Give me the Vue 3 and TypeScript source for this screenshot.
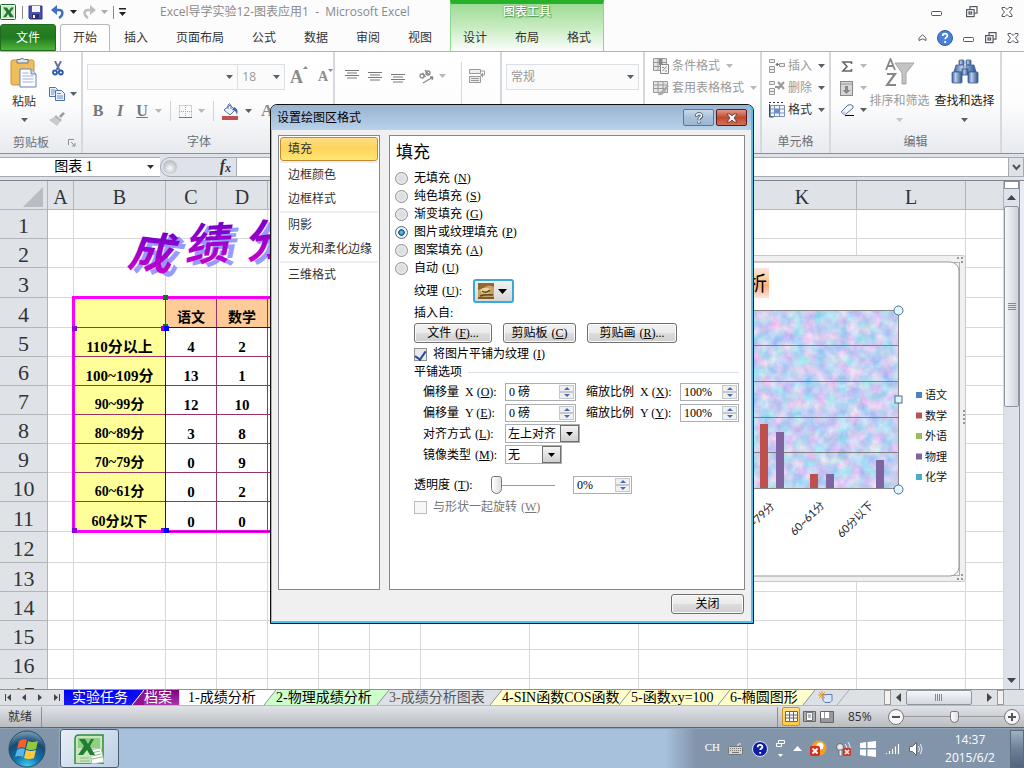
<script setup lang="ts">
import { h, ref } from 'vue'

const Caret = (props: { tone?: string }) =>
  h('svg', { width: 7, height: 4, viewBox: '0 0 7 4' }, [h('path', { d: 'M0 0h7L3.5 4z', fill: props.tone ?? '#5a5f66' })])
Caret.props = ['tone']

const ribbonTabs = ['插入', '页面布局', '公式', '数据', '审阅', '视图']
const chartTabs = ['设计', '布局', '格式']

const columns = ['A', 'B', 'C', 'D', '', '', '', '', '', '', 'K', 'L', '']

interface Row { n: number; label: string; wide?: boolean; c: string; d: string }
const scores: Row[] = [
  { n: 5, label: '110分以上', wide: true, c: '4', d: '2' },
  { n: 6, label: '100~109分', wide: true, c: '13', d: '1' },
  { n: 7, label: '90~99分', c: '12', d: '10' },
  { n: 8, label: '80~89分', c: '3', d: '8' },
  { n: 9, label: '70~79分', c: '0', d: '9' },
  { n: 10, label: '60~61分', c: '0', d: '2' },
  { n: 11, label: '60分以下', c: '0', d: '0' },
]

const legend = [
  { name: '语文', color: '#4f81bd' },
  { name: '数学', color: '#c0504d' },
  { name: '外语', color: '#9bbb59' },
  { name: '物理', color: '#8064a2' },
  { name: '化学', color: '#4bacc6' },
]
const bars = [
  { x: 300, y: 169, color: '#c0504d' },
  { x: 316, y: 177, color: '#8064a2' },
  { x: 350, y: 219, color: '#c0504d' },
  { x: 366, y: 219, color: '#8064a2' },
  { x: 416, y: 205, color: '#8064a2' },
]
const gridlines = [90, 126, 162, 197]

const sections = [['填充'], ['边框颜色', '边框样式'], ['阴影', '发光和柔化边缘'], ['三维格式']]
const fills = [
  { text: '无填充', key: 'N' },
  { text: '纯色填充', key: 'S' },
  { text: '渐变填充', key: 'G' },
  { text: '图片或纹理填充', key: 'P' },
  { text: '图案填充', key: 'A' },
  { text: '自动', key: 'U' },
]
const fill = ref('P')
const tile = ref(true)
const transparency = ref(0)
const zoom = ref(50)

interface SheetTab { name: string; width: number; bg: string; fg: string; next: string; end?: boolean }
const sheetTabs: SheetTab[] = [
  { name: '2-物理成绩分析', width: 101, bg: '#ccffcc', fg: '#000', next: '#dde1e6' },
  { name: '3-成绩分析图表', width: 101, bg: '#dde1e6', fg: '#555', next: '#ffffcc' },
  { name: '4-SIN函数COS函数', width: 117, bg: '#ffffcc', fg: '#000', next: '#ffffcc' },
  { name: '5-函数xy=100', width: 87, bg: '#ffffcc', fg: '#000', next: '#ffffcc' },
  { name: '6-椭圆图形', width: 73, bg: '#ffffcc', fg: '#000', next: '#dde1e6' },
]
</script>

<template>
  <div class="desktop">
    <header class="head">
      <div class="head-left">
        <div class="title-row">
          <svg width="17" height="17" viewBox="0 0 17 17"><rect x=".5" y=".5" width="15" height="15" rx="1" fill="#e9f5e6" stroke="#1c6b2c" /><path d="M2 2h12v12H2z" fill="#cfe8c9" /><path d="M3 3.500h4l2 3 2-3h3l-3.500 4.800 3.500 5h-4l-2-3.200-2 3.200H3l3.500-5z" fill="#1d7a2f" /></svg>
          <i class="qsep"></i>
          <button class="ib" aria-label="保存"><svg width="15" height="15" viewBox="0 0 15 15"><path d="M1 1h13v13H2l-1-1z" fill="#4a52b5" stroke="#2b3188" /><path d="M4 1h8v6H4z" fill="#f4f6fb" /><path d="M4 9h7v5H4z" fill="#2a2f70" /><path d="M5 10h2v3H5z" fill="#fff" /></svg></button>
          <button class="ib undo" aria-label="撤消"><svg width="14" height="14" viewBox="0 0 14 14"><path d="M4 5h4c5 0 4 6 0 8" fill="none" stroke="#3d6fc0" stroke-width="2.500" /><path d="M0 5l6-5v10z" fill="#3d6fc0" /></svg></button>
          <Caret tone="#222" />
          <button class="ib" aria-label="恢复"><svg width="14" height="14" viewBox="0 0 14 14"><path d="M10 5H6C1 5 2 11 6 13" fill="none" stroke="#bcbec2" stroke-width="2.500" /><path d="M14 5L8 0v10z" fill="#bcbec2" /></svg></button>
          <Caret tone="#aaa" />
          <i class="qsep"></i>
          <button class="ib" aria-label="自定义快速访问工具栏"><svg width="7" height="8" viewBox="0 0 7 8"><path d="M0 0h7v1.500H0zM0 4h7L3.500 8z" fill="#222" /></svg></button>
          <h1 class="title">Excel导学实验12-图表应用1&nbsp; - &nbsp;Microsoft Excel</h1>
        </div>
        <nav class="tab-row">
          <button class="file">文件</button>
          <button class="rtab active">开始</button>
          <button v-for="t in ribbonTabs" :key="t" class="rtab">{{ t }}</button>
        </nav>
      </div>
      <div class="context">
        <div class="context-title">图表工具</div>
        <nav class="context-tabs"><button v-for="t in chartTabs" :key="t" class="rtab">{{ t }}</button></nav>
      </div>
      <div class="head-right">
        <div class="win-row">
          <button class="ib" aria-label="最小化"><svg width="12" height="12" viewBox="0 0 12 12"><rect x=".5" y="5.500" width="10" height="4" rx="1" fill="#fff" stroke="#53585f" /></svg></button>
          <button class="ib" aria-label="向下还原"><svg width="12" height="12" viewBox="0 0 12 12"><g fill="#fff" stroke="#53585f" stroke-width="1.200"><rect x="4" y=".6" width="7" height="6.500" /><rect x=".6" y="3.600" width="7.500" height="7" /><rect x="3" y="6" width="2.600" height="2" /></g></svg></button>
          <button class="ib" aria-label="关闭"><svg width="12" height="12" viewBox="0 0 12 12"><path d="M1 1.500h3l2 2 2-2h3v1.500l-2.500 3 2.500 3v1.500H8l-2-2-2 2H1V9l2.500-3L1 3z" fill="#fff" stroke="#53585f" /></svg></button>
        </div>
        <div class="doc-row">
          <button class="ib" aria-label="折叠功能区"><svg width="9" height="8" viewBox="0 0 9 8"><path d="M4.500.7L8 4.200v2.300L4.500 4.800 1 6.500V4.200z" fill="#fff" stroke="#53585f" /></svg></button>
          <button class="ib" aria-label="帮助"><svg width="16" height="16" viewBox="0 0 16 16"><circle cx="8" cy="8" r="7.500" fill="#4a80d6" stroke="#2e5fae" /><path d="M5.700 6c0-3 4.700-3 4.700-.2 0 1.500-2.200 1.700-2.200 3.400M8.200 11v2" fill="none" stroke="#fff" stroke-width="1.800" /></svg></button>
          <button class="ib" aria-label="最小化工作簿"><svg width="12" height="12" viewBox="0 0 12 12"><rect x=".5" y="5.500" width="10" height="4" rx="1" fill="#fff" stroke="#53585f" /></svg></button>
          <button class="ib" aria-label="还原工作簿"><svg width="12" height="12" viewBox="0 0 12 12"><g fill="#fff" stroke="#53585f" stroke-width="1.200"><rect x="4" y=".6" width="7" height="6.500" /><rect x=".6" y="3.600" width="7.500" height="7" /><rect x="3" y="6" width="2.600" height="2" /></g></svg></button>
          <button class="ib" aria-label="关闭工作簿"><svg width="12" height="12" viewBox="0 0 12 12"><path d="M1 1.500h3l2 2 2-2h3v1.500l-2.500 3 2.500 3v1.500H8l-2-2-2 2H1V9l2.500-3L1 3z" fill="#fff" stroke="#53585f" /></svg></button>
        </div>
      </div>
    </header>

    <section class="ribbon">
      <div class="group g-clip">
        <div class="g-body">
          <button class="big paste">
            <svg width="28" height="32" viewBox="0 0 28 32"><rect x="1" y="3" width="23" height="25" rx="2" fill="#f0bd5c" stroke="#c8923a" /><path d="M7 6V2.500h3Q12 0 14.500 2.500H18V6z" fill="#dfe3ea" stroke="#6c7480" /><path d="M10 12h11l5 5v13H10z" fill="#fbfdff" stroke="#6884ac" /><path d="M21 12v5h5" fill="#d3def0" stroke="#6884ac" /><path d="M12.500 16h6M12.500 19h11M12.500 22h11M12.500 25h11" stroke="#9fb2d0" /></svg>
            <span>粘贴</span><Caret />
          </button>
          <div class="minis">
            <button class="ib" aria-label="剪切"><svg width="12" height="15" viewBox="0 0 12 15"><path d="M3 0l4.500 9M9 0L4.500 9" stroke="#5a7099" stroke-width="1.800" /><circle cx="3" cy="11.500" r="2" fill="none" stroke="#2b55a5" stroke-width="1.800" /><circle cx="8.800" cy="11.500" r="2" fill="none" stroke="#2b55a5" stroke-width="1.800" /></svg></button>
            <div class="row-mini"><button class="ib" aria-label="复制"><svg width="16" height="14" viewBox="0 0 16 14"><path d="M.5.500h6l2 2v7h-8z" fill="#e8f0fb" stroke="#4a70ad" /><path d="M6.500 3.500h6l3 3v7h-9z" fill="#e8f0fb" stroke="#4a70ad" /><path d="M2 3h4M2 5h4M2 7h3M8 6.500h4M8 9h6M8 11h6" stroke="#6f92cb" /></svg></button><Caret /></div>
            <button class="ib" aria-label="格式刷"><svg width="16" height="14" viewBox="0 0 16 14"><path d="M10 4l4-4 2 1.500L12 6z" fill="#9c9c9c" /><path d="M7 3l6 5-2 2-6-5z" fill="#b8b8b8" /><path d="M5 5l6 5-3 4-8-6z" fill="#cacaca" /></svg></button>
          </div>
        </div>
        <div class="g-label launch">剪贴板<svg width="8" height="8" viewBox="0 0 8 8"><path d="M.5 6V.5H6M3 3l4 4M7 4v3H4" fill="none" stroke="#8a8f96" /></svg></div>
      </div>

      <div class="group g-font">
        <div class="g-body col">
          <div class="row combos">
            <button class="combo name" aria-label="字体"><Caret /></button>
            <button class="combo size" aria-label="字号"><span>18</span><Caret /></button>
            <button class="ib serif grow" aria-label="增大字号">A<svg width="5" height="3" viewBox="0 0 5 3"><path d="M0 3h5L2.500 0z" fill="#8b8b8b" /></svg></button>
            <button class="ib serif shrink" aria-label="减小字号">A<svg width="5" height="3" viewBox="0 0 5 3"><path d="M0 0h5L2.500 3z" fill="#8b8b8b" /></svg></button>
          </div>
          <div class="row styles">
            <button class="ib serif b">B</button><button class="ib serif i">I</button><button class="ib serif u">U</button><Caret tone="#b8b8b8" />
            <i class="sep"></i>
            <button class="ib" aria-label="边框"><svg width="13" height="13" viewBox="0 0 13 13"><path d="M.5.500h12v12M.5.500v12M6.500 0v12M0 6.500h13" fill="none" stroke="#a9a9a9" stroke-dasharray="1 1" /><path d="M0 12.500h13" stroke="#777" /></svg></button><Caret tone="#b8b8b8" />
            <i class="sep"></i>
            <button class="ib" aria-label="填充颜色"><svg width="17" height="17" viewBox="0 0 17 17"><path d="M2 7l6-5 5 5-5 5z" fill="#eef3fb" stroke="#54709f" /><path d="M6 6V2q2-3 3 1v3" fill="none" stroke="#54709f" /><path d="M12 4q5 2 3 8-1-5-5-5z" fill="#3f66ae" /><path d="M0 13h16v4H0z" fill="#c0504d" /></svg></button><Caret />
            <button class="ib serif fontcolor" aria-label="字体颜色">A</button>
          </div>
        </div>
        <div class="g-label">字体</div>
      </div>

      <div class="group g-align">
        <div class="row align-row">
          <button class="ib up" aria-label="顶端对齐"><svg width="14" height="9" viewBox="0 0 14 9"><path d="M0 .500h14M2 3h10M0 5.500h14M2 8h10" stroke="#777" /></svg></button>
          <button class="ib" aria-label="垂直居中"><svg width="14" height="9" viewBox="0 0 14 9"><path d="M0 .500h14M2 3h10M0 5.500h14M2 8h10" stroke="#777" /></svg></button>
          <button class="ib down" aria-label="底端对齐"><svg width="14" height="9" viewBox="0 0 14 9"><path d="M0 .500h14M2 3h10M0 5.500h14M2 8h10" stroke="#777" /></svg></button>
          <button class="ib orient" aria-label="方向"><svg width="17" height="15" viewBox="0 0 17 15"><g fill="none" stroke="#888" stroke-width="1.300"><circle cx="4" cy="7" r="2" /><path d="M4.500 4l3 4M7 1l4 5" /><circle cx="10" cy="4" r="2" /><path d="M5 14L15 8M15 8l-3 0M15 8l-1 3" /></g></svg></button>
          <Caret tone="#b8b8b8" />
        </div>
        <i class="tall"></i>
        <button class="ib wrap" aria-label="自动换行"><svg width="16" height="16" viewBox="0 0 16 16"><path d="M.5 1.500h11v4H.5zM.5 8.500h11v6H.5z" fill="#eee" stroke="#999" /><path d="M2 10.500h8M2 12.500h8M12 3h3.500v4h-3" fill="none" stroke="#999" /><path d="M14 4.500v5L11 7z" fill="#999" /></svg></button>
      </div>

      <div class="group g-num"><button class="combo num"><span>常规</span><Caret /></button></div>

      <div class="group g-style">
        <button class="line dim"><svg width="16" height="16" viewBox="0 0 16 16"><path d="M.5.500h13v12H.5zM.5 4.500h13M.5 8.500h13M5 0v12M9 0v12" fill="#e5e5e5" stroke="#999" /><path d="M6 1h3v6H6z" fill="#888" /><path d="M7.500 6.500h8v9h-8z" fill="#f5f5f5" stroke="#888" /><path d="M9.500 13l4-4.500M9 9.500h2M12 13h2" stroke="#888" /></svg>条件格式<Caret tone="#b8b8b8" /></button>
        <button class="line dim"><svg width="16" height="16" viewBox="0 0 16 16"><path d="M.5 1.500h14v11H.5zM.5 5h14M.5 8.500h14M5 1v11M10 1v11" fill="#e5e5e5" stroke="#999" /><path d="M5 15q0-3 4-4l5-6 2 1-5 7q-2 3-6 2z" fill="#aaa" /></svg>套用表格格式<Caret tone="#b8b8b8" /></button>
      </div>

      <div class="group g-cells">
        <div class="g-body col tight">
          <button class="line dim"><svg width="16" height="15" viewBox="0 0 16 15"><path d="M.5.500h5v3h-5zM.5 7.500h5v3h-5zM.5 10.500h5v3h-5zM10.500 4.500h5v3h-5z" fill="#eee" stroke="#999" /><path d="M7 5.500h3M7 5.500l1.500-1.500v3z" stroke="#777" fill="#777" /></svg>插入<Caret /></button>
          <button class="line dim"><svg width="16" height="15" viewBox="0 0 16 15"><path d="M.5.500h5v3h-5zM.5 7.500h5v3h-5zM.5 10.500h5v3h-5z" fill="#eee" stroke="#999" /><path d="M6 6h4M9 1l6 7M15 1L9 8" stroke="#999" stroke-width="2" /></svg>删除<Caret /></button>
          <button class="line"><svg width="16" height="16" viewBox="0 0 16 16"><path d="M1.500 3.500h14v11h-14zM1.500 7h14M1.500 11h14M5.500 3v11M10.500 3v11" fill="#f2f6fc" stroke="#7a8fae" /><path d="M6 7h5v4H6z" fill="#5b92e8" /><path d="M0 .500h16" stroke="#334" stroke-dasharray="2 2" /><path d="M.5 2v13h4" stroke="#334a66" fill="none" /></svg>格式<Caret /></button>
        </div>
        <div class="g-label">单元格</div>
      </div>

      <div class="group g-edit">
        <div class="g-body">
          <div class="edits">
            <div class="row"><button class="ib" aria-label="自动求和"><svg width="14" height="11" viewBox="0 0 14 11"><path d="M11.500 3V1H3l4 4.500L3 10h8.500V8" fill="none" stroke="#666" stroke-width="1.600" /></svg></button><Caret tone="#b8b8b8" /></div>
            <div class="row"><button class="ib" aria-label="填充"><svg width="14" height="15" viewBox="0 0 14 15"><rect x=".5" y=".5" width="12" height="14" fill="#d6d6d6" stroke="#888" /><path d="M1 3h11" stroke="#999" /><path d="M5 5h3v4h2.500l-4 4-4-4H5z" fill="#888" /></svg></button><Caret tone="#b8b8b8" /></div>
            <div class="row"><button class="ib" aria-label="清除"><svg width="14" height="12" viewBox="0 0 14 12"><path d="M1 8l7-7q3-1 5 1v2L6 10H3z" fill="#f3f6fb" stroke="#55709e" /><path d="M1 8l4-.5 1 2.500H3z" fill="#c2cfe6" /><path d="M5 11.500h9" stroke="#000" /></svg></button><Caret /></div>
          </div>
          <button class="big dim sort">
            <svg width="30" height="30" viewBox="0 0 30 30"><path d="M1 12L5.500 1 10 12M3 8h5" fill="none" stroke="#888" stroke-width="1.800" /><path d="M2 16h8L2 27h9" fill="none" stroke="#888" stroke-width="2.200" /><path d="M10 5h19L21 15v11h-4V15z" fill="#c4c4c4" stroke="#a5a5a5" /></svg>
            <span>排序和筛选</span><Caret tone="#c4c4c4" />
          </button>
          <button class="big find">
            <svg width="28" height="30" viewBox="0 0 28 30">
              <defs><linearGradient id="tube"><stop offset="0" stop-color="#3c5f9e" /><stop offset=".35" stop-color="#b9cdec" /><stop offset="1" stop-color="#2f528f" /></linearGradient></defs>
              <g fill="url(#tube)" stroke="#3a5a92" stroke-width=".8"><rect x="8" y="2" width="5" height="5" rx="1" /><rect x="15" y="2" width="5" height="5" rx="1" /><path d="M5 7h8v7H3zM15 7h8l2 7H15z" /><rect x="1" y="14" width="10" height="11" rx="1" /><rect x="17" y="14" width="10" height="11" rx="1" /><rect x="11" y="11" width="6" height="6" /></g>
            </svg>
            <span>查找和选择</span><Caret />
          </button>
        </div>
        <div class="g-label">编辑</div>
      </div>
    </section>

    <section class="formula">
      <div class="namebox"><input aria-label="名称框" value="图表 1" /><Caret tone="#333" /></div>
      <div class="fx"><span class="knob"></span><em>f<sub>x</sub></em></div>
      <input class="finput" aria-label="编辑栏" />
      <button class="expand" aria-label="展开编辑栏"><svg width="9" height="7" viewBox="0 0 9 7"><path d="M1 1l3.500 4L8 1" fill="none" stroke="#555" stroke-width="2" /></svg></button>
    </section>

    <main class="sheet">
      <div class="cells">
        <table>
          <colgroup>
            <col class="w-head" /><col class="w-a" /><col class="w-b" />
            <col v-for="i in 5" :key="i" class="w-s" /><col v-for="i in 5" :key="'l' + i" class="w-l" /><col />
          </colgroup>
          <thead><tr><th class="corner"><svg width="20" height="20" viewBox="0 0 20 20"><path d="M20 0v20H0z" fill="#b9bdc2" /></svg></th><th v-for="(c, i) in columns" :key="i">{{ c }}</th></tr></thead>
          <tbody>
            <tr v-for="n in 3" :key="n" :class="{ tall30: n === 3 }"><th>{{ n }}</th><td v-for="i in 13" :key="i"></td></tr>
            <tr class="tall30"><th>4</th><td></td><td class="yl"></td><td class="sub">语文</td><td class="sub">数学</td><td class="sub"></td><td v-for="i in 8" :key="i"></td></tr>
            <tr v-for="r in scores" :key="r.n" :class="{ tall30: r.n === 11 }"><th>{{ r.n }}</th><td></td><td class="yl" :class="{ wide: r.wide }">{{ r.label }}</td><td class="val">{{ r.c }}</td><td class="val">{{ r.d }}</td><td class="val"></td><td v-for="i in 8" :key="i"></td></tr>
            <tr v-for="n in 6" :key="n" :class="{ tall31: n === 1 }"><th>{{ n + 11 }}</th><td v-for="i in 13" :key="i"></td></tr>
          </tbody>
        </table>

        <svg class="ranges" width="260" height="250" viewBox="0 0 260 250">
          <path d="M260 9.500H8.500v234H260" fill="none" stroke="#ff00ff" stroke-width="3" />
          <path d="M8.500 40v203" stroke="#9400d3" />
          <path d="M100.500 39V9.500H260" fill="none" stroke="#008000" />
          <path d="M260 39.500H100.500v204H260" fill="none" stroke="#0000ff" />
          <path d="M98 7h5v5h-5zM98 36h5v3h-5z" fill="#008000" />
          <path d="M7 38h5v5H7zM96 38h3v5h-3zM7 240h5v5H7zM96 240h3v5h-3z" fill="#9400d3" />
          <path d="M99 38h5v5h-5zM99 240h5v5h-5z" fill="#0000ff" />
        </svg>

        <svg class="wordart" width="190" height="80" viewBox="0 0 190 80">
          <defs><linearGradient id="wa" x1="0" y1="0" x2="0" y2="1"><stop offset=".1" stop-color="#6600cc" /><stop offset=".9" stop-color="#cc00cc" /></linearGradient></defs>
          <g class="wa-shadow"><text x="14" y="58" transform="rotate(7 32 45)">成</text><text x="70" y="50" transform="rotate(-3 90 35)">绩</text><text x="129" y="46" transform="rotate(-8 150 30)">分</text></g>
          <g fill="url(#wa)"><text x="8" y="55" transform="rotate(7 28 42)">成</text><text x="64" y="47" transform="rotate(-3 85 32)">绩</text><text x="123" y="43" transform="rotate(-8 145 27)">分</text></g>
        </svg>

        <figure class="chart">
          <svg width="506" height="327" viewBox="0 0 506 327">
            <defs>
              <filter id="tex" x="0" y="0" width="100%" height="100%" color-interpolation-filters="sRGB">
                <feTurbulence type="fractalNoise" baseFrequency=".09" numOctaves="5" seed="8" />
                <feColorMatrix values=".6 0 0 0 .47  0 .34 0 0 .65  0 0 .1 0 .9  0 0 0 0 1" />
              </filter>
              <linearGradient id="ttl" x1="0" y1="0" x2="0" y2="1"><stop offset="0" stop-color="#fbe6df" /><stop offset=".3" stop-color="#fdd3a0" /><stop offset=".6" stop-color="#f9b07e" /><stop offset="1" stop-color="#fde4dc" /></linearGradient>
            </defs>
            <rect x=".5" y=".5" width="505" height="326" rx="3" fill="#f0f0f0" stroke="#c8c8c8" />
            <rect x="6.500" y="7.500" width="493" height="313" fill="#f4f4f4" stroke="#b0b0b0" />
            <rect x="7" y="7" width="492" height="314" rx="9" fill="#fff" stroke="#999" />
            <g fill="#999"><path v-for="p in [[497, 2], [501, 2], [501, 6], [497, 323], [501, 323], [501, 319], [503, 155], [503, 159], [503, 163], [503, 167]]" :key="p.join()" :d="`M${p[0]} ${p[1]}h2v2h-2z`" /></g>
            <rect x="215" y="13" width="94" height="30" fill="url(#ttl)" />
            <text class="ct" x="307" y="36">析</text>
            <rect x="40" y="55" width="398" height="178" filter="url(#tex)" />
            <path v-for="y in gridlines" :key="y" :d="`M40 ${y}.5h398`" stroke="#808080" />
            <rect x="40.500" y="55.500" width="398" height="178" fill="none" stroke="#868686" />
            <rect v-for="b in bars" :key="b.x" :x="b.x" :y="b.y" width="8" :height="233 - b.y" :fill="b.color" />
            <g class="axis"><text transform="translate(315 252) rotate(-45)">70~79分</text><text transform="translate(365 251) rotate(-45)">60~61分</text><text transform="translate(414 251) rotate(-45)">60分以下</text></g>
            <g fill="#e0f6fa" stroke="#4d6f8f"><circle cx="438.500" cy="55.500" r="4.500" /><circle cx="438.500" cy="234.500" r="4.500" /><rect x="435" y="141" width="7" height="7" /></g>
            <g v-for="(l, i) in legend" :key="l.name"><rect x="456" :y="137 + i * 20.500" width="6" height="6" :fill="l.color" /><text class="lg" x="465" :y="144 + i * 20.500">{{ l.name }}</text></g>
          </svg>
        </figure>
      </div>
      <div class="vscroll">
        <span class="split"></span>
        <button class="sb" aria-label="向上滚动"><svg width="9" height="5" viewBox="0 0 9 5"><path d="M0 5h9L4.500 0z" fill="#444" /></svg></button>
        <span class="vthumb"><svg width="8" height="8" viewBox="0 0 8 8"><path d="M0 .500h8M0 2.500h8M0 4.500h8M0 6.500h8" stroke="#888" /></svg></span>
        <span class="fillup"></span>
        <button class="sb" aria-label="向下滚动"><svg width="9" height="5" viewBox="0 0 9 5"><path d="M0 0h9L4.500 5z" fill="#444" /></svg></button>
      </div>
      <div class="edge"></div>
    </main>

    <nav class="sheetbar">
      <div class="nav4">
        <button class="ib" aria-label="第一张"><svg width="7" height="7" viewBox="0 0 7 7"><path d="M0 0h1v7H0zM6 0v7L2 3.500z" fill="#444" /></svg></button>
        <button class="ib" aria-label="上一张"><svg width="7" height="7" viewBox="0 0 7 7"><path d="M5 0v7L1 3.500z" fill="#444" /></svg></button>
        <button class="ib" aria-label="下一张"><svg width="7" height="7" viewBox="0 0 7 7"><path d="M1 0v7l4-3.500z" fill="#444" /></svg></button>
        <button class="ib" aria-label="最后一张"><svg width="7" height="7" viewBox="0 0 7 7"><path d="M6 0h1v7H6zM1 0v7l4-3.500z" fill="#444" /></svg></button>
      </div>
      <button class="st task">实验任务</button>
      <svg class="slash" width="12" height="15" viewBox="0 0 12 15"><path d="M0 0h12L0 15z" fill="#0a0af5" /><path d="M12 0v15H0z" fill="#911191" /><path d="M12 0L0 15" stroke="#fff" /></svg>
      <button class="st archive">档案</button>
      <button class="st current">1-成绩分析</button>
      <svg class="slash" width="12" height="15" viewBox="0 0 12 15"><path d="M0 0h12L0 15z" fill="#fff" /><path d="M12 0v15H0z" fill="#ccffcc" /><path d="M12 0L0 15" stroke="#8e939a" /></svg>
      <template v-for="t in sheetTabs" :key="t.name">
        <button class="st" :style="{ width: t.width + 'px', background: t.bg, color: t.fg }">{{ t.name }}</button>
        <svg class="slash" width="12" height="15" viewBox="0 0 12 15"><path d="M0 0h12L0 15z" :fill="t.bg" /><path d="M12 0v15H0z" :fill="t.next" /><path d="M12 0L0 15" stroke="#8e939a" /></svg>
      </template>
      <button class="ib newtab" aria-label="插入工作表"><svg width="16" height="13" viewBox="0 0 16 13"><path d="M5 3.500h9v6l-2 2H7L5 9.500z" fill="#dbe7f9" stroke="#5a7ab5" /><path d="M4 0v8M0 4h8M1 1l6 6M7 1L1 7" stroke="#e39a2d" /></svg></button>
      <svg class="slash" width="12" height="15" viewBox="0 0 12 15"><path d="M12 0L0 15" stroke="#a5aab1" /></svg>
      <div class="hscroll">
        <span class="hs"></span>
        <button class="sb" aria-label="向左滚动"><svg width="5" height="9" viewBox="0 0 5 9"><path d="M5 0v9L0 4.500z" fill="#444" /></svg></button>
        <span class="hthumb"><svg width="8" height="7" viewBox="0 0 8 7"><path d="M.5 0v7M2.500 0v7M4.500 0v7M6.500 0v7" stroke="#888" /></svg></span>
        <span class="fillup"></span>
        <button class="sb" aria-label="向右滚动"><svg width="5" height="9" viewBox="0 0 5 9"><path d="M0 0v9l5-4.500z" fill="#444" /></svg></button>
        <span class="hs"></span>
      </div>
    </nav>

    <footer class="status">
      <span class="ready">就绪</span>
      <span class="fillup"></span>
      <i class="ssep"></i>
      <button class="view on" aria-label="普通"><svg width="13" height="11" viewBox="0 0 13 11"><path d="M.5.500h12v10H.5zM0 4h13M0 7h13M4.500 0v11M8.500 0v11" fill="#fff" stroke="#666" /></svg></button>
      <button class="view" aria-label="页面布局视图"><svg width="13" height="11" viewBox="0 0 13 11"><path d="M.5.500h12v10H.5z" fill="#aaa" stroke="#666" /><path d="M3.500 1.500h6v8h-6z" fill="#fff" stroke="#777" /><path d="M5 4h3M5 6h3" stroke="#777" /></svg></button>
      <button class="view" aria-label="分页预览"><svg width="14" height="12" viewBox="0 0 14 12"><path d="M.5.500h13v11H.5z" fill="#999" stroke="#666" /><path d="M1 1h3v6H1zM5 1h4v6H5z" fill="#fff" /></svg></button>
      <span class="pct">85%</span>
      <button class="round" aria-label="缩小"><svg width="16" height="16" viewBox="0 0 16 16"><circle cx="8" cy="8" r="7.500" fill="#f6f6f6" stroke="#777" /><path d="M4 8h8" stroke="#555" stroke-width="2" /></svg></button>
      <input v-model="zoom" class="slider zoom" type="range" min="0" max="100" aria-label="显示比例" />
      <button class="round" aria-label="放大"><svg width="16" height="16" viewBox="0 0 16 16"><circle cx="8" cy="8" r="7.500" fill="#f6f6f6" stroke="#777" /><path d="M4 8h8M8 4v8" stroke="#555" stroke-width="2" /></svg></button>
    </footer>

    <footer class="taskbar">
      <button class="orb" aria-label="开始">
        <svg width="38" height="38" viewBox="0 0 38 38">
          <defs><radialGradient id="orb" cx=".5" cy="1" r="1"><stop offset="0" stop-color="#3fd4f8" /><stop offset=".35" stop-color="#1277ae" /><stop offset=".7" stop-color="#164a72" /><stop offset="1" stop-color="#7fa2bd" /></radialGradient></defs>
          <circle cx="19" cy="19" r="18" fill="url(#orb)" stroke="#2c4a66" />
          <path d="M11 11q4-3 8-1l-2 8q-4-2-8 1z" fill="#f0612f" /><path d="M20 11q4 2 10 0l-2 8q-5 2-10 0z" fill="#92c83e" /><path d="M9 20q4-3 8-1l-2 8q-4-2-8 0z" fill="#59b4ea" /><path d="M18 20q5 2 10 0l-2 8q-5 2-10 0z" fill="#fcc83c" />
        </svg>
      </button>
      <button class="app" aria-label="Excel">
        <svg width="30" height="30" viewBox="0 0 30 30"><path d="M1 5q0-4 4-4h24v29H1z" fill="#c8e5bd" stroke="#2f8b3b" stroke-width="1.500" /><path d="M4 4h22v10H4z" fill="#8fcf82" /><path d="M16 16l11-2 3 14-12 2z" fill="#fff" stroke="#a5c7a1" /><path d="M17 19l9-2M18 22l9-2M18 25l10-2M6 24h9M6 27h10" stroke="#8fb98d" /><path d="M5 5h6l3 5 3-5h3l-4 7 5 9h-5l-3-5-4 5H4l6-9z" fill="#1f7e31" /></svg>
      </button>
      <span class="fillup"></span>
      <div class="tray">
        <span class="ch">CH</span>
        <svg width="16" height="12" viewBox="0 0 16 12"><path d="M10 3q-1-2 1-2h2" fill="none" stroke="#eee" /><rect x=".5" y="3.500" width="14" height="8" rx="1" fill="#d4d4d4" stroke="#777" /><path d="M2 5.500h11M2 7.500h11" stroke="#777" stroke-dasharray="1 1" /><path d="M4 9.500h7" stroke="#777" /></svg>
        <svg width="16" height="16" viewBox="0 0 16 16"><circle cx="8" cy="8" r="7.500" fill="#0f1fa5" stroke="#dfe4f5" /><path d="M5.700 6.200c0-3 4.700-3 4.700-.2 0 1.500-2.200 1.500-2.200 3M8.200 11v1.800" fill="none" stroke="#fff" stroke-width="1.800" /></svg>
        <svg width="9" height="17" viewBox="0 0 9 17"><path d="M2.500.500h6v3h-6zM.5 3.500h5v3h-5z" fill="#8294aa" stroke="#fff" /><path d="M2 14h5l-2.500 3z" fill="#fff" /></svg>
        <svg width="9" height="5" viewBox="0 0 9 5"><path d="M0 5h9L4.500 0z" fill="#fff" /></svg>
        <svg width="17" height="17" viewBox="0 0 17 17"><circle cx="9" cy="8" r="7.500" fill="#f7a01c" /><circle cx="10" cy="6" r="3.500" fill="#fff" /><rect y="6" width="10" height="10" rx="2" fill="#d92a1c" /><path d="M2.500 8.500l5 5M7.500 8.500l-5 5" stroke="#fff" stroke-width="2" /></svg>
        <svg width="17" height="16" viewBox="0 0 17 16"><circle cx="5" cy="6" r="3.500" fill="#e8e8e8" stroke="#666" /><path d="M4 9h3v6H4z" fill="#eee" stroke="#777" /><path d="M10 3q3 3 1 7M13 1q4 6 1 12" fill="none" stroke="#eee" /><rect x="8" y="7" width="8" height="8" rx="1" fill="#d0382b" /><path d="M10 9l4 4M14 9l-4 4" stroke="#fff" stroke-width="1.500" /></svg>
        <svg width="17" height="16" viewBox="0 0 17 16"><path d="M0 2l6-1v6H0zM7.500 1L16 0v7H7.500zM0 8.500h6V15l-6-1zM7.500 8.500H16V16l-8.500-1z" fill="#fff" /></svg>
        <svg width="16" height="12" viewBox="0 0 16 12"><path d="M.5 9.500h2v2h-2zM3.500 7.500h2v4h-2zM6.500 5.500h2v6h-2zM9.500 3h2v8.500h-2zM12.500.500h2v11h-2z" fill="#fff" stroke="#5d6b7c" stroke-width=".5" /></svg>
        <svg width="14" height="14" viewBox="0 0 14 14"><path d="M.5 4.500h3l4-4v13l-4-4h-3z" fill="#fff" stroke="#666" /><path d="M9.500 4q2 3 0 6M11.500 2q3 5 0 10" fill="none" stroke="#eee" /></svg>
        <div class="clock"><span>14:37</span><span>2015/6/2</span></div>
        <button class="peek" aria-label="显示桌面"></button>
      </div>
    </footer>

    <section class="dialog" role="dialog" aria-labelledby="dlg-title">
      <div class="dlg-title">
        <h2 id="dlg-title">设置绘图区格式</h2>
        <button class="cap help" aria-label="帮助"><svg width="10" height="12" viewBox="0 0 10 12"><path d="M2.500 4.500c0-3.500 5-3.500 5-.5C7.500 6 5 5.500 5 8M5 9.500v2" fill="none" stroke="#3e4c60" stroke-width="3.200" /><path d="M2.500 4c0-3 5-3 5-.2C7.500 5.500 5 5.500 5 7.700M5 9.300v1.700" fill="none" stroke="#fff" stroke-width="1.600" /></svg></button>
        <button class="cap x" aria-label="关闭"><svg width="12" height="10" viewBox="0 0 12 10"><path d="M1 1h3l2 2 2-2h3L8 5l3 4H8L6 7 4 9H1l3-4z" fill="#fff" stroke="#5b2a2a" stroke-width=".8" /></svg></button>
      </div>
      <div class="dlg-body">
        <nav class="side">
          <div v-for="(s, i) in sections" :key="i" class="sec"><button v-for="t in s" :key="t" :class="{ sel: t === '填充' }">{{ t }}</button></div>
        </nav>
        <div class="pane">
          <h3>填充</h3>
          <label v-for="f in fills" :key="f.key" class="radio"><input v-model="fill" type="radio" name="fill" :value="f.key" /><span>{{ f.text }}<span class="key">(<u>{{ f.key }}</u>)</span></span></label>
          <div class="r28 in1"><span>纹理<span class="key">(<u>U</u>):</span></span>
            <button class="texture" aria-label="纹理"><svg width="16" height="16" viewBox="0 0 16 16"><rect width="16" height="16" fill="#c8a260" /><path d="M0 0h16v4q-5-3-9 0t-7 3z" fill="#8b6a38" /><path d="M2 7q4-4 11-1l-3 5-6-1z" fill="#ead39c" /><path d="M4 8q4 3 8-1M2 13q6-2 13-1" stroke="#5d4320" fill="none" stroke-width="1.500" /><path d="M0 14h16v2H0z" fill="#7b5c31" /></svg><svg width="9" height="5" viewBox="0 0 9 5"><path d="M0 0h9L4.500 5z" fill="#000" /></svg></button>
          </div>
          <div class="r16 in1">插入自:</div>
          <div class="r24 in1 btns"><button class="btn b1">文件<span class="key">(<u>F</u>)...</span></button><button class="btn b2">剪贴板<span class="key">(<u>C</u>)</span></button><button class="btn b3">剪贴画<span class="key">(<u>R</u>)...</span></button></div>
          <label class="check in1"><input v-model="tile" type="checkbox" /><span>将图片平铺为纹理<span class="key">(<u>I</u>)</span></span></label>
          <div class="legend in1"><span>平铺选项</span><i></i></div>
          <div class="opts">
            <label for="ox">偏移量<span class="key wide-key">X (<u>O</u>):</span></label>
            <div class="spin"><input id="ox" value="0 磅" /><span class="ud"><button aria-label="增大"></button><button class="dn" aria-label="减小"></button></span></div>
            <label class="second" for="sx">缩放比例<span class="key wide-key">X (<u>X</u>):</span></label>
            <div class="spin"><input id="sx" value="100%" /><span class="ud"><button aria-label="增大"></button><button class="dn" aria-label="减小"></button></span></div>
            <label for="oy">偏移量<span class="key wide-key">Y (<u>E</u>):</span></label>
            <div class="spin"><input id="oy" value="0 磅" /><span class="ud"><button aria-label="增大"></button><button class="dn" aria-label="减小"></button></span></div>
            <label class="second" for="sy">缩放比例<span class="key wide-key">Y (<u>Y</u>):</span></label>
            <div class="spin"><input id="sy" value="100%" /><span class="ud"><button aria-label="增大"></button><button class="dn" aria-label="减小"></button></span></div>
            <label for="al">对齐方式<span class="key">(<u>L</u>):</span></label>
            <div class="sel-wrap s1"><select id="al"><option>左上对齐</option></select><span><Caret tone="#000" /></span></div>
            <label for="mi">镜像类型<span class="key">(<u>M</u>):</span></label>
            <div class="sel-wrap s2"><select id="mi"><option>无</option></select><span><Caret tone="#000" /></span></div>
          </div>
          <div class="trans in1">
            <label for="tr">透明度<span class="key">(<u>T</u>):</span></label>
            <input id="tr" v-model="transparency" class="slider" type="range" min="0" max="100" />
            <div class="spin"><input value="0%" aria-label="透明度百分比" /><span class="ud"><button aria-label="增大"></button><button class="dn" aria-label="减小"></button></span></div>
          </div>
          <label class="check off in1"><input type="checkbox" disabled /><span>与形状一起旋转<span class="key">(<u>W</u>)</span></span></label>
        </div>
      </div>
      <div class="dlg-foot"><button class="btn close">关闭</button></div>
    </section>
  </div>
</template>

<style>
html, body { margin: 0; overflow: hidden; }
</style>

<style scoped>
* { box-sizing: border-box; }
.desktop { position: relative; height: 100vh; min-width: 1000px; display: flex; flex-direction: column; overflow: hidden; font: 12px/16px "Open Sans", "Noto Sans CJK SC", sans-serif; color: #333; background: #fff; }
button { font: inherit; color: inherit; border: 0; padding: 0; background: none; white-space: nowrap; }
input, select { font: inherit; color: inherit; margin: 0; padding: 0; min-width: 0; border: 0; background: none; outline: 0; }
svg { display: block; flex: none; }
h1, h2, h3 { margin: 0; font-weight: 400; }
.ib { display: flex; align-items: center; }
.row { display: flex; align-items: center; }
.col { flex-direction: column; }
.fillup { flex: 1; }

.head { display: flex; height: 51px; flex: none; background: #fcfcfd; }
.head-left { width: 450px; display: flex; flex-direction: column; }
.title-row { height: 24px; display: flex; align-items: center; gap: 5px; }
.qsep { width: 1px; height: 13px; background: #8a8a8a; }
.undo { margin-left: 3px; }
.title { font-size: 12px; color: #8a8a8a; margin-left: 29px; white-space: nowrap; }
.tab-row { display: flex; flex: 1; }
.file { width: 56px; margin-right: 4px; color: #fff; border: 1px solid #1e6b1e; border-radius: 3px 3px 0 0; background: linear-gradient(#2c8029, #1f7a1d 50%, #4fb43a); }
.rtab { padding: 0 14px; }
.active { width: 50px; padding: 0; border: 1px solid #b5b9be; border-bottom: 0; border-radius: 3px 3px 0 0; background: #fff; }
.context { width: 154px; flex: none; display: flex; flex-direction: column; border-top: 4px solid #26b12a; border-left: 1px solid #8fd48f; border-right: 1px solid #8fd48f; background: linear-gradient(#9edb95, #c8ecc2 50%, #fcfdfc); }
.context-title { height: 20px; line-height: 16px; text-align: center; color: #fff; font-weight: 500; text-shadow: 0 0 2px #4f9a4f, 1px 1px 1px #4f9a4f; }
.context-tabs { display: flex; flex: 1; justify-content: center; }
.head-right { flex: 1; display: flex; flex-direction: column; align-items: flex-end; }
.win-row { height: 24px; display: flex; align-items: center; gap: 23px; padding-right: 11px; }
.doc-row { flex: 1; display: flex; align-items: center; gap: 10px; padding-right: 5px; }

.ribbon { height: 103px; flex: none; display: flex; border-top: 1px solid #b0b4b8; border-bottom: 1px solid #8b9097; background: linear-gradient(#fff, #fdfdfe 50%, #e7eaee); }
.group { flex: none; display: flex; flex-direction: column; border-right: 2px solid #d5d8dc; }
.g-body { flex: 1; display: flex; }
.g-label { height: 21px; line-height: 19px; text-align: center; color: #6c7075; }
.launch { display: flex; align-items: center; justify-content: space-between; padding: 0 5px 0 13px; }
.g-clip { width: 83px; }
.big { display: flex; flex-direction: column; align-items: center; }
.big span { line-height: 20px; }
.paste { width: 48px; padding-top: 5px; gap: 2px; }
.paste span { margin-top: 1px; }
.minis { padding: 9px 0 0 1px; display: flex; flex-direction: column; gap: 11px; }
.minis > .ib:first-child { padding-left: 3px; }
.row-mini { display: flex; align-items: center; gap: 5px; }
.g-font { width: 252px; padding-left: 4px; }
.g-font .g-label { padding-right: 22px; }
.combos { height: 26px; margin-top: 12px; }
.combo { height: 26px; display: flex; align-items: center; justify-content: space-between; padding: 0 4px; color: #999; border: 1px solid #dcdfe4; background: #fbfbfc; }
.name { width: 153px; justify-content: flex-end; }
.size { width: 48px; margin-left: -1px; }
.num { width: 100%; }
.serif { font-family: "Liberation Serif", serif; font-weight: 700; color: #8b8b8b; }
.grow { font-size: 18px; margin-left: 5px; height: 22px; }
.shrink { font-size: 14px; margin-left: 10px; }
.grow svg, .shrink svg { align-self: flex-start; }
.styles { height: 24px; margin-top: 9px; gap: 6px; padding-left: 4px; }
.b, .i, .u { font-size: 16px; width: 14px; justify-content: center; color: #777; }
.i { font-style: italic; margin-left: 2px; }
.u { text-decoration: underline; margin-left: 2px; }
.sep { width: 1px; height: 20px; background: #d0d3d7; margin: 0 2px; }
.fontcolor { font-size: 17px; margin-left: 3px; }
.g-align { width: 167px; flex-direction: row; }
.align-row { height: 26px; margin-top: 11px; gap: 9px; padding-left: 10px; }
.up { padding-bottom: 4px; }
.down { padding-top: 4px; }
.orient { padding-left: 4px; }
.align-row > svg { margin-left: -5px; }
.tall { width: 1px; background: #d5d8dc; margin: 10px 7px 0 15px; }
.wrap { align-self: flex-start; margin-top: 16px; }
.g-num { width: 143px; padding: 12px 4px 0; }
.g-style { width: 117px; padding: 3px 0 0 8px; }
.g-cells { width: 69px; }
.tight { padding: 3px 0 0 7px; }
.line { height: 22px; display: flex; align-items: center; gap: 3px; }
.line svg:last-child { margin-left: 3px; }
.dim { color: #999; }
.g-edit { width: 171px; }
.edits { width: 36px; padding: 3px 0 0 9px; }
.edits .row { height: 22px; gap: 6px; }
.sort, .find { width: 65px; padding-top: 6px; gap: 3px; }
.big > svg:last-child { margin-top: 4px; }
.find { color: #222; }

.formula { height: 27px; flex: none; display: flex; padding: 3px 0; background: #dfe3e9; border-bottom: 1px solid #80848a; }
.namebox { width: 160px; display: flex; align-items: center; background: #fff; border: 1px solid #a5abb2; border-width: 1px 0; padding-right: 6px; color: #000; font-family: "Liberation Serif", "Noto Sans CJK SC", serif; font-size: 14px; }
.namebox input { flex: 1; text-align: center; }
.fx { width: 77px; display: flex; align-items: center; justify-content: space-between; padding: 0 5px 0 2px; border: 1px solid #a5abb2; border-radius: 10px 0 0 10px; }
.knob { width: 14px; height: 14px; border-radius: 7px; background: radial-gradient(circle at 50% 60%, #fafafa, #b8bcc2 70%, #e8eaee); }
.fx em { font: italic bold 16px/16px "Liberation Serif", serif; color: #333; }
.fx sub { font-size: 12px; vertical-align: -1px; }
.finput { flex: 1; background: #fff; border: 1px solid #a5abb2; border-width: 1px 0; }
.expand { width: 16px; display: flex; align-items: center; justify-content: center; border: 1px solid #a5abb2; }

.sheet { flex: 1; min-height: 0; display: flex; overflow: hidden; }
.cells { position: relative; flex: 1; min-width: 0; overflow: hidden; font-family: "Liberation Serif", "Noto Sans CJK SC", serif; }
table { width: 100%; table-layout: fixed; border-collapse: separate; border-spacing: 0; }
.w-head { width: 48px; } .w-a { width: 26px; } .w-b { width: 92px; } .w-s { width: 51px; } .w-l { width: 109px; }
th, td { height: 29px; padding: 0; border-right: 1px solid #d8d8d8; border-bottom: 1px solid #d8d8d8; overflow: hidden; white-space: nowrap; }
.tall30 > * { height: 30px; }
.tall31 > * { height: 31px; }
th { background: #dfe3e8; border-color: #b1b5ba; color: #333; font-weight: 400; font-size: 22px; line-height: 22px; padding-top: 4px; }
thead th { font-size: 20px; }
.corner svg { margin: 0 4px 0 auto; }
td { text-align: center; vertical-align: bottom; font-weight: 700; font-size: 14px; line-height: 18px; color: #000; }
.yl { background: #ffff99; border-color: #993366; }
.sub { background: #ffcc99; border-color: #993366; }
.val { border-color: #993366; }
.val, .wide { font-size: 15px; }
.ranges { position: absolute; left: 65px; top: 107px; }
.wordart { position: absolute; left: 120px; top: 32px; font: italic 700 44px "Noto Sans CJK SC", sans-serif; }
.wa-shadow { fill: #9999ff; }
.chart { position: absolute; left: 460px; top: 74px; margin: 0; }
.ct { font: 20px "Noto Sans CJK SC", sans-serif; text-anchor: end; fill: #000; }
.axis { font: 11px Lato, "Noto Sans CJK SC", sans-serif; text-anchor: end; fill: #222; }
.lg { font: 11px "Noto Sans CJK SC", sans-serif; fill: #111; }
.vscroll { width: 15px; display: flex; flex-direction: column; align-items: center; background: #dce1ea; }
.split { width: 15px; height: 8px; border: 1px solid #8a8f97; background: #fff; }
.sb { width: 15px; height: 17px; display: flex; align-items: center; justify-content: center; }
.vthumb { width: 15px; height: 201px; display: flex; align-items: center; justify-content: center; border: 1px solid #8f959e; border-radius: 2px; background: linear-gradient(90deg, #f5f7f9, #cdd3db); }
.edge { width: 5px; border-left: 1px solid #8d929b; background: #e9ecf3; }

.sheetbar { height: 17px; flex: none; display: flex; align-items: flex-start; border-top: 1px solid #8d929b; border-bottom: 1px solid #b5b9c0; background: #dde1e6; font: 14px/15px "Liberation Serif", "Noto Sans CJK SC", serif; overflow: hidden; }
.nav4 { width: 64px; height: 15px; display: flex; align-items: center; justify-content: space-around; }
.st { height: 15px; flex: none; text-align: left; }
.task { width: 68px; padding-left: 8px; color: #fff; background: linear-gradient(#0000ff, #1a1ae8); }
.archive { width: 35px; color: #fff; background: linear-gradient(#800080, #a838a8); }
.current { width: 84px; margin-left: 1px; padding-left: 8px; color: #000; background: #fff; }
.newtab { height: 15px; padding: 0 3px; }
.hscroll { width: 140px; margin-left: auto; height: 15px; display: flex; align-items: stretch; padding-right: 20px; }
.hscroll .sb { height: 15px; }
.hs { width: 7px; border: 1px solid #999; background: #f2f2f2; }
.hthumb { width: 66px; display: flex; align-items: center; justify-content: center; border: 1px solid #8f959e; border-radius: 2px; background: linear-gradient(#f5f7f9, #d3d8e0); }

.status { height: 22px; flex: none; display: flex; align-items: center; padding-right: 4px; background: linear-gradient(#dfe2e6, #b9bcc0); border-bottom: 1px solid #5b6470; }
.ready { width: 42px; padding-left: 8px; border-right: 1px solid #8b8f95; line-height: 20px; }
.ssep { width: 1px; height: 20px; background: #8b8f95; margin-right: 4px; }
.view { width: 18px; height: 19px; display: flex; align-items: center; justify-content: center; }
.on { border: 1px solid #c79529; border-radius: 2px; background: linear-gradient(#fde08a, #ffc942); }
.pct { width: 32px; margin: 0 8px 0 12px; }
.round { width: 16px; height: 16px; }
.slider { appearance: none; height: 20px; background: linear-gradient(#9a9a9a, #9a9a9a) center / 100% 1px no-repeat; }
.slider::-webkit-slider-thumb { appearance: none; width: 11px; height: 18px; border: 1px solid #777; border-radius: 3px 3px 6px 6px; background: linear-gradient(90deg, #fff, #ddd); }
.zoom { width: 100px; }
.zoom::-webkit-slider-thumb { width: 9px; height: 12px; }

.taskbar { height: 40px; flex: none; display: flex; align-items: stretch; border-top: 1px solid #8fa3b8; background: linear-gradient(90deg, #8294aa 58px, #a7c0dc 62px, #a7c0dc 65%, #8294aa 68%); }
.orb { width: 60px; padding-left: 8px; }
.app { width: 59px; padding-left: 13px; border: 1px solid #4d5c6e; border-radius: 3px; background: linear-gradient(135deg, #e9eff6, #d0dfee 50%, #bccfe2); }
.tray { display: flex; align-items: center; gap: 8px; color: #fff; }
.ch { font: 11px/16px "Liberation Serif", serif; padding-bottom: 4px; }
.clock { width: 76px; margin-left: 1px; display: flex; flex-direction: column; align-items: center; line-height: 18px; }
.peek { width: 14px; height: 38px; margin-left: -6px; border: 1px solid #5b6a7c; background: linear-gradient(#9fb0c2, #6d8096 50%, #52657c); }

.dialog { position: absolute; left: 270px; top: 104px; width: 484px; height: 520px; display: flex; flex-direction: column; border: 1px solid #111; border-radius: 7px 7px 0 0; box-shadow: inset -2px -2px 0 #3cc8f0, inset 1px 0 0 #8fb6e0; background: #f0f0f0; color: #000; font-family: "Liberation Serif", "Noto Sans CJK SC", serif; }
.dlg-title { height: 25px; flex: none; display: flex; align-items: flex-start; padding: 4px 4px 0 6px; border-radius: 6px 6px 0 0; background: linear-gradient(#99b4d1, #b9d1ea); border-right: 2px solid #3cc8f0; }
.dlg-title h2 { flex: 1; font-size: 12px; line-height: 18px; }
.cap { width: 31px; height: 17px; display: flex; align-items: center; justify-content: center; border: 1px solid #5e7590; border-radius: 2px; margin-left: 2px; }
.help { background: linear-gradient(#c9d9ea, #a8c0da 50%, #9db8d5); }
.x { border-color: #5a1a1a; background: linear-gradient(#e2998b, #c1492f 50%, #cf7259); }
.dlg-body { flex: 1; display: flex; gap: 9px; padding: 5px 8px 0 7px; min-height: 0; }
.side { width: 102px; border: 1px solid #828790; background: #fff; padding: 1px 1px; }
.sec { display: flex; flex-direction: column; border-bottom: 2px solid #eceef3; }
.sec:last-child { border: 0; }
.sec button { height: 24px; padding-left: 7px; text-align: left; color: #333; border: 1px solid transparent; }
.sec .sel { border-color: #c28a30; border-radius: 3px; background: linear-gradient(#ffdf86, #fdd35c 45%, #ffe873); }
.pane { flex: 1; border: 1px solid #828790; background: #fff; padding-left: 5px; }
.pane h3 { font-size: 17px; line-height: 33px; height: 33px; padding-left: 1px; }
.key { margin-left: 4px; }
.wide-key { margin-left: 6px; }
.radio, .check { height: 18px; display: flex; align-items: center; gap: 6px; }
.radio input { appearance: none; width: 13px; height: 13px; border: 1px solid #8e8f8f; border-radius: 50%; background: radial-gradient(#dcdfe2 35%, #f4f4f4); }
.radio input:checked { border-color: #4a6a86; background: radial-gradient(circle, #58b8ec 0 15%, #0e4674 38%, #eef3f8 45%); }
.in1 { margin-left: 19px; }
.r28 { height: 28px; display: flex; align-items: center; gap: 11px; }
.r16 { height: 16px; }
.r24 { height: 24px; display: flex; align-items: center; }
.texture { width: 41px; height: 24px; display: flex; align-items: center; justify-content: space-between; padding: 0 5px 0 3px; border: 2px solid #39a9dc; border-radius: 3px; background: linear-gradient(#f2f2f2, #d6d6d6); }
.btns { gap: 11px; }
.btn { height: 20px; line-height: 16px; border: 1px solid #707070; border-radius: 3px; box-shadow: inset 0 0 0 1px #fafafa; background: linear-gradient(#f2f2f2, #ebebeb 50%, #dddddd 51%, #cfcfcf); }
.b1 { width: 78px; } .b2 { width: 73px; } .b3 { width: 90px; } .close { width: 73px; }
.check input { appearance: none; width: 13px; height: 13px; display: flex; justify-content: center; border: 1px solid #8e8f8f; background: #e6e9ee; }
.check input:checked::after { content: ""; width: 5px; height: 9px; border: solid #31479e; border-width: 0 2px 2px 0; transform: rotate(35deg); }
.off { height: 20px; color: #777; }
.check.off input { border-color: #bbb; background: #f7f7f7; }
.legend { height: 18px; display: flex; align-items: center; gap: 6px; padding-right: 5px; }
.legend i { flex: 1; height: 1px; background: #d5dfe5; }
.opts { display: grid; grid-template-columns: 82px 71px 104px 59px; grid-auto-rows: 21px; align-items: center; margin-left: 28px; }
.second { padding-left: 10px; }
.spin { height: 18px; display: flex; padding: 1px; border: 1px solid #abadb3; background: #fff; }
.spin input { flex: 1; width: 20px; padding-left: 2px; line-height: 14px; }
.ud { width: 15px; flex: none; display: flex; flex-direction: column; }
.ud button { flex: 1; display: flex; align-items: center; justify-content: center; border: 1px solid #c5c9ce; background: #f0f0f0; }
.ud button::after { content: ""; border: 3px solid transparent; border-top: 0; border-bottom-color: #4a6cb5; }
.ud .dn::after { border-top: 3px solid #4a6cb5; border-bottom: 0; }
.sel-wrap { height: 19px; display: flex; grid-column: 2 / -1; border: 1px solid #abadb3; background: #fff; }
.s1 { width: 75px; } .s2 { width: 57px; }
.sel-wrap select { appearance: none; flex: 1; padding-left: 2px; }
.sel-wrap span { width: 19px; display: flex; align-items: center; justify-content: center; border: 1px solid #707070; background: linear-gradient(#f5f5f5, #cfcfcf); }
.trans { height: 24px; margin-top: 8px; display: flex; align-items: center; }
.trans label { width: 77px; }
.trans .slider { width: 64px; margin-right: 18px; }
.trans .spin { width: 59px; }
.dlg-foot { height: 33px; flex: none; display: flex; justify-content: flex-end; align-items: flex-start; padding: 4px 9px 0; }
</style>
